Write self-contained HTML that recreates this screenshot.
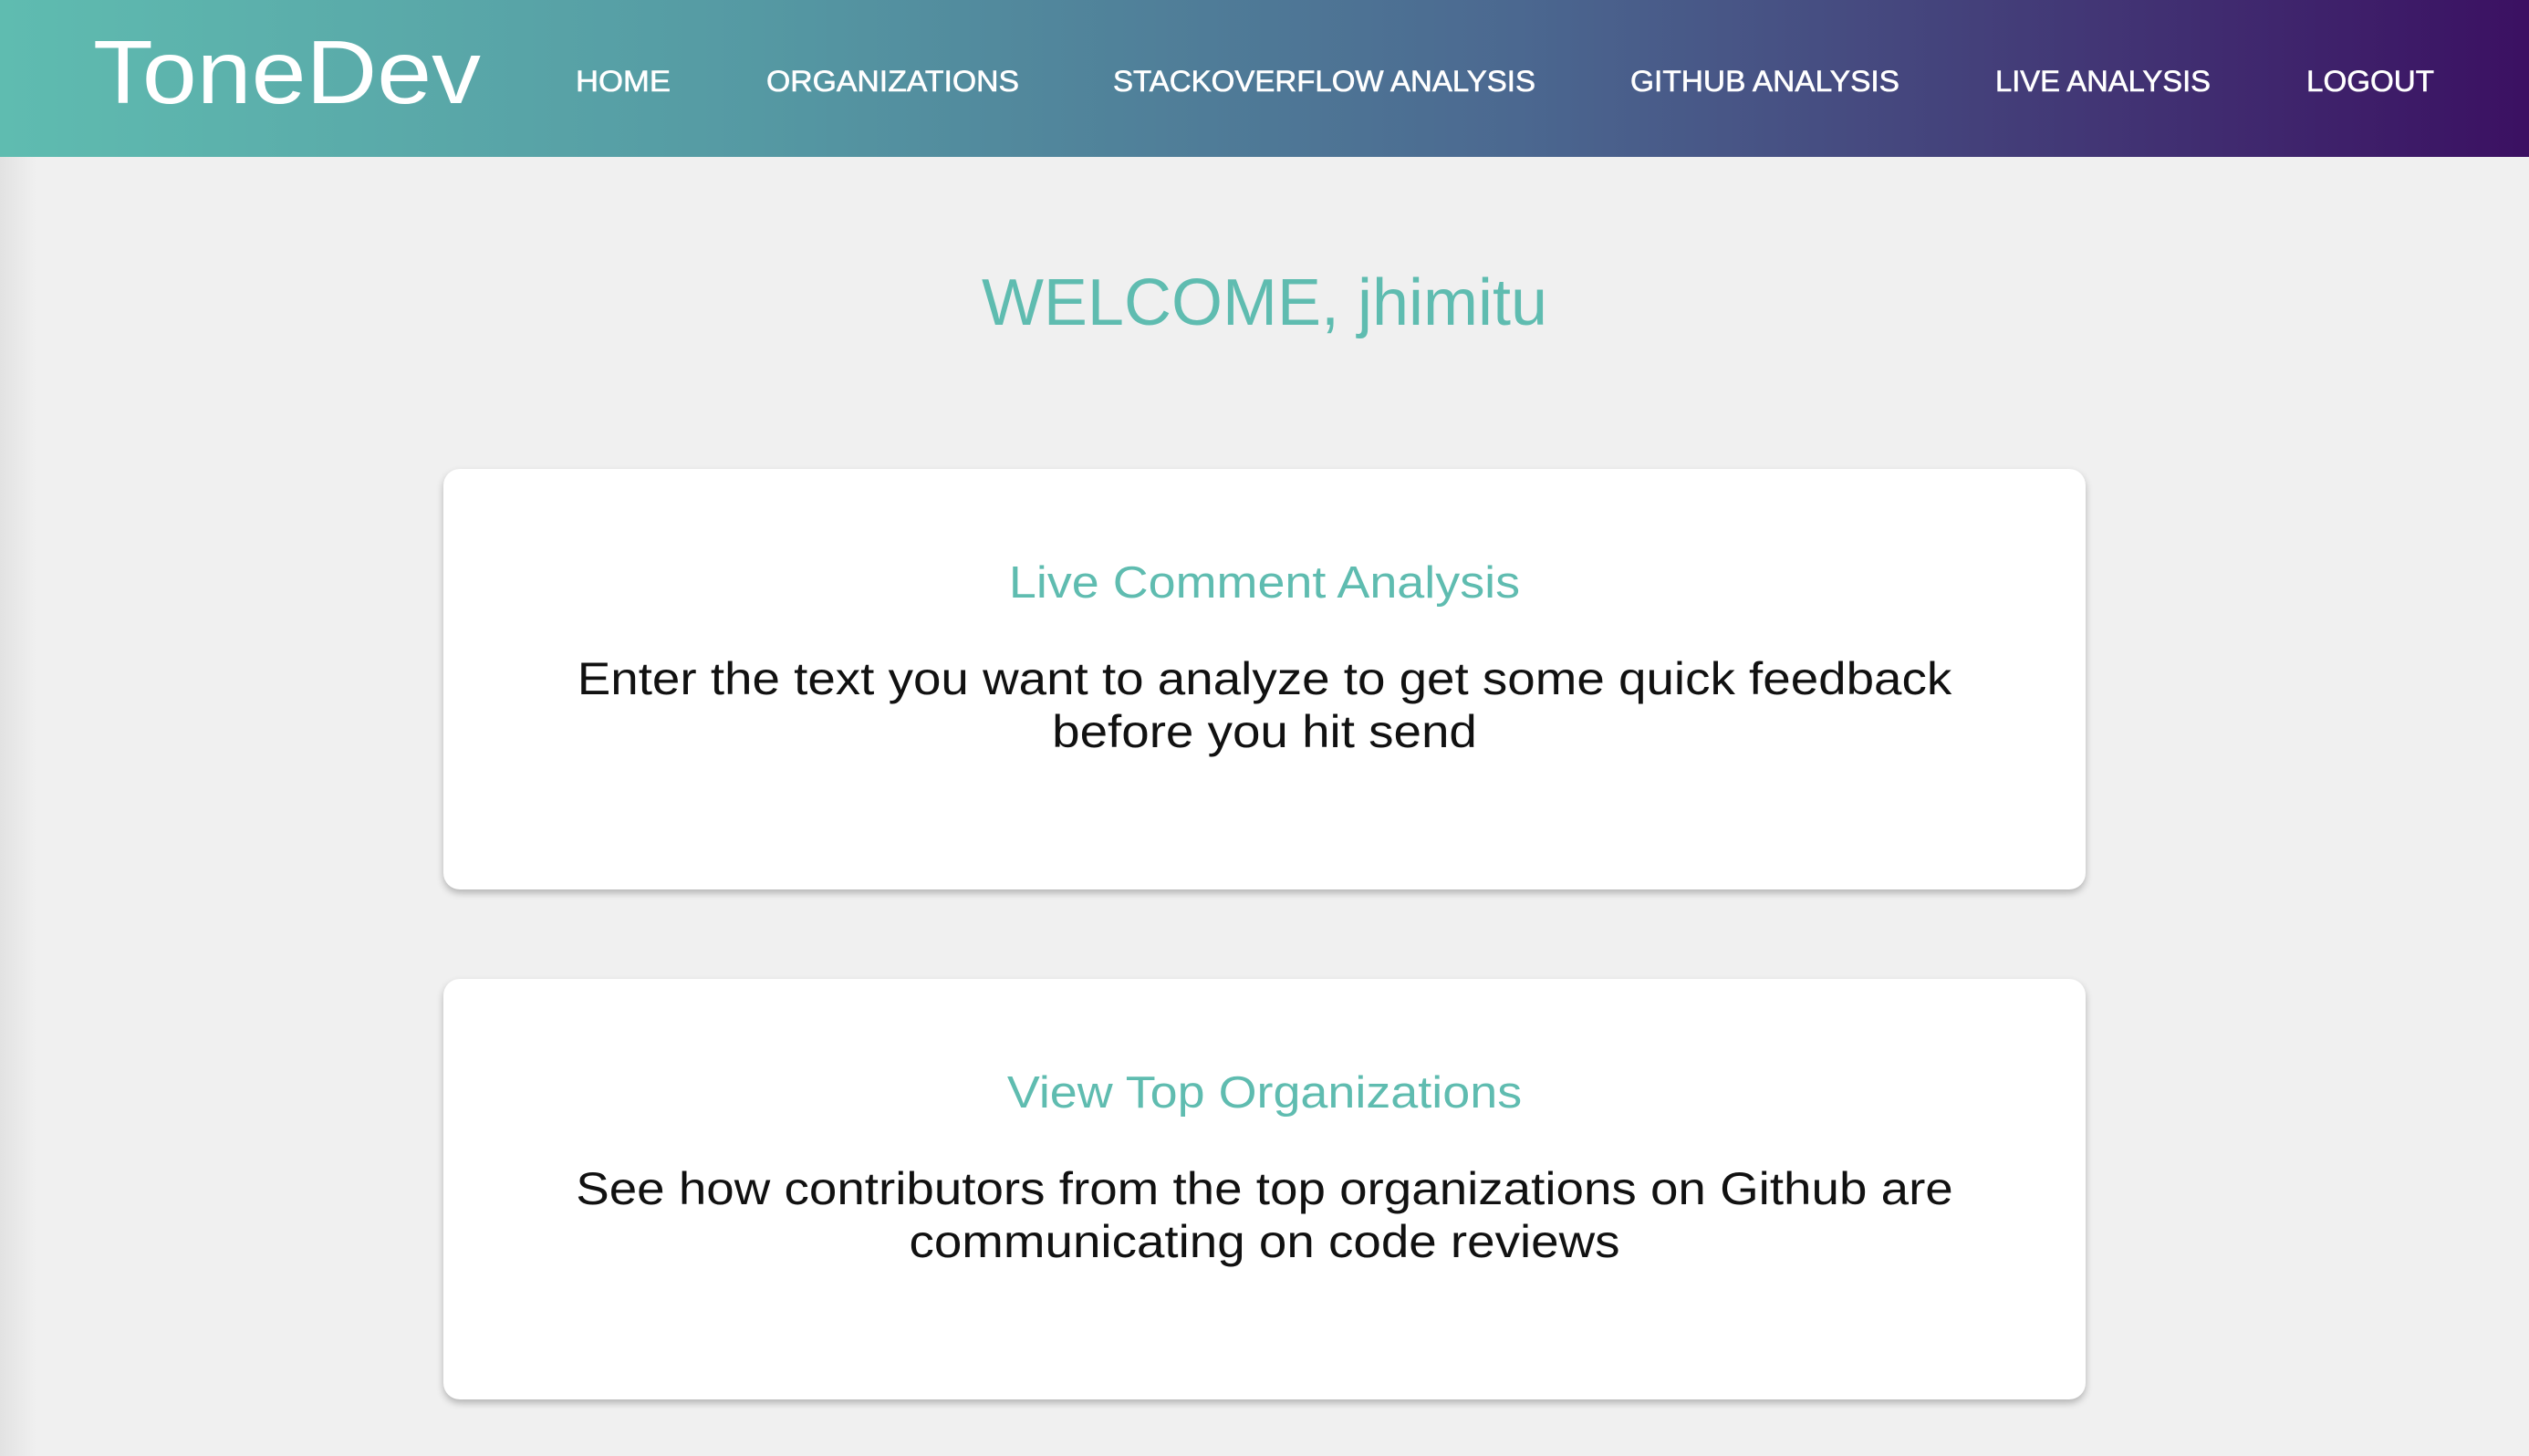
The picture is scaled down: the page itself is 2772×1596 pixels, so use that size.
<!DOCTYPE html>
<html><head><meta charset="utf-8"><style>
html,body{margin:0;padding:0}
body{width:2772px;height:1596px;overflow:hidden;background:#f0f0f0;font-family:"Liberation Sans",sans-serif;position:relative}
.edge{position:absolute;left:0;top:172px;width:40px;height:1424px;background:linear-gradient(90deg,#e2e2e2,#f0f0f0)}
header{position:absolute;left:0;top:0;width:2772px;height:172px;z-index:2;background:linear-gradient(90deg,#5fbcb0 0%,#5599a3 30%,#4b6890 60%,#433c78 80%,#3b1062 100%)}
svg text{font-family:"Liberation Sans",sans-serif;fill:#fff}
.card{position:absolute;left:486px;width:1800px;height:461px;background:#fff;border-radius:18px;box-shadow:0 4px 8px rgba(0,0,0,.25)}
.t{position:absolute;left:0;width:100%;text-align:center;color:#5fbcb0;font-size:49px;transform:scaleX(1.1)}
.b{position:absolute;left:0;width:100%;text-align:center;color:#111;font-size:50px;line-height:58px;transform:scaleX(1.095)}
</style></head><body>
<header>
<svg width="2772" height="172">
<text x="102" y="113" font-size="98" textLength="425" lengthAdjust="spacingAndGlyphs">ToneDev</text>
<g font-size="32" stroke="#fff" stroke-width="0.6">
<text x="631" y="100" textLength="104" lengthAdjust="spacingAndGlyphs">HOME</text>
<text x="840" y="100" textLength="277" lengthAdjust="spacingAndGlyphs">ORGANIZATIONS</text>
<text x="1220" y="100" textLength="463" lengthAdjust="spacingAndGlyphs">STACKOVERFLOW ANALYSIS</text>
<text x="1787" y="100" textLength="295" lengthAdjust="spacingAndGlyphs">GITHUB ANALYSIS</text>
<text x="2187" y="100" textLength="236" lengthAdjust="spacingAndGlyphs">LIVE ANALYSIS</text>
<text x="2528" y="100" textLength="140" lengthAdjust="spacingAndGlyphs">LOGOUT</text>
</g>
</svg>
</header>
<div class="edge"></div>
<div style="position:absolute;left:0;width:2772px;top:292px;text-align:center;color:#5fbcb0;font-size:72px;line-height:80px">WELCOME, jhimitu</div>
<div class="card" style="top:514px">
<div class="t" style="top:97px">Live Comment Analysis</div>
<div class="b" style="top:201px">Enter the text you want to analyze to get some quick feedback<br>before you hit send</div>
</div>
<div class="card" style="top:1073px">
<div class="t" style="top:97px">View Top Organizations</div>
<div class="b" style="top:201px">See how contributors from the top organizations on Github are<br>communicating on code reviews</div>
</div>
</body></html>
